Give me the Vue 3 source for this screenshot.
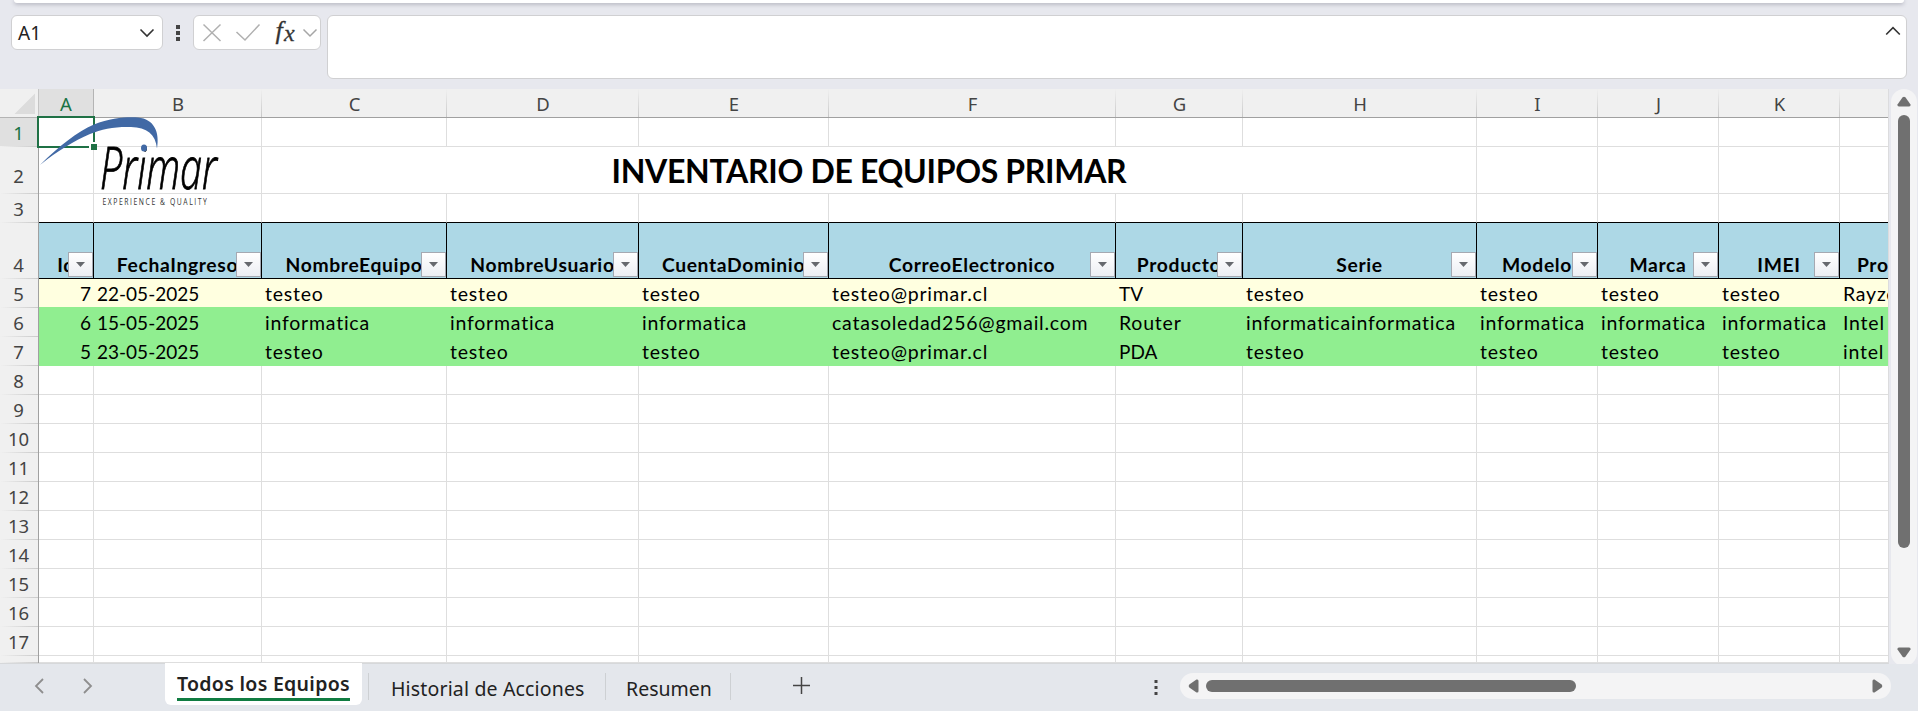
<script setup>
const columns = [
  { id: 'A', w: 55, head: 'Id' },
  { id: 'B', w: 168, head: 'FechaIngreso' },
  { id: 'C', w: 185, head: 'NombreEquipo' },
  { id: 'D', w: 192, head: 'NombreUsuario' },
  { id: 'E', w: 190, head: 'CuentaDominio' },
  { id: 'F', w: 287, head: 'CorreoElectronico' },
  { id: 'G', w: 127, head: 'Producto' },
  { id: 'H', w: 234, head: 'Serie' },
  { id: 'I', w: 121, head: 'Modelo' },
  { id: 'J', w: 121, head: 'Marca' },
  { id: 'K', w: 121, head: 'IMEI' },
  { id: '', w: 138, head: 'Procesador' },
]
const template = '39px ' + columns.map((c) => c.w + 'px').join(' ')

const records = [
  { n: 5, tone: 'yellow', cells: ['7', '22-05-2025', 'testeo', 'testeo', 'testeo', 'testeo@primar.cl', 'TV', 'testeo', 'testeo', 'testeo', 'testeo', 'Rayzen'] },
  { n: 6, tone: 'green', cells: ['6', '15-05-2025', 'informatica', 'informatica', 'informatica', 'catasoledad256@gmail.com', 'Router', 'informaticainformatica', 'informatica', 'informatica', 'informatica', 'Intel'] },
  { n: 7, tone: 'green', cells: ['5', '23-05-2025', 'testeo', 'testeo', 'testeo', 'testeo@primar.cl', 'PDA', 'testeo', 'testeo', 'testeo', 'testeo', 'intel'] },
]
const emptyRows = [8, 9, 10, 11, 12, 13, 14, 15, 16, 17]
const isWord = (t) => /[a-z]/.test(t)
</script>

<template>
  <div class="app">
    <div class="ribbon"></div>
    <div class="formula">
      <div class="box namebox">
        <span>A1</span>
        <svg width="16" height="10" viewBox="0 0 16 10"><path d="M1.500 1.500 8 8l6.500-6.500" fill="none" stroke="#333" stroke-width="1.600" /></svg>
      </div>
      <svg class="dots" width="6" height="18" viewBox="0 0 6 18"><path d="M1 1h4v4H1zM1 7h4v4H1zM1 13h4v4H1z" fill="#444" /></svg>
      <div class="box tools">
        <svg width="126" height="33" viewBox="0 0 126 33" fill="none">
          <path d="M9.500 8.500l17 16.500M26.500 8.500l-17 16.500" stroke="#b0b0b0" stroke-width="1.500" />
          <path d="M42.500 16l8.500 8 14.500-15.500" stroke="#b0b0b0" stroke-width="1.500" />
          <path d="M109.500 13.500l6.500 6.500 6.500-6.500" stroke="#a6a6a6" stroke-width="1.500" />
          <text x="81.500" y="22.500" class="fx">f</text>
          <text x="90" y="24.500" class="fx small">x</text>
        </svg>
      </div>
      <div class="box bar">
        <svg width="16" height="10" viewBox="0 0 16 10"><path d="M1.200 8.500 8 1.700l6.800 6.800" fill="none" stroke="#333" stroke-width="1.600" /></svg>
      </div>
    </div>

    <div class="work">
      <div class="sheet">
        <div class="row colheads" :style="{ gridTemplateColumns: template }">
          <div class="corner">
            <svg width="38" height="28" viewBox="0 0 38 28"><path d="M35 4.500V25H14.500z" fill="#dcdcdc" /></svg>
          </div>
          <div v-for="(c, i) in columns" :key="i" class="ch" :class="{ on: i === 0 }">{{ c.id }}</div>
        </div>
        <div class="row" :style="{ gridTemplateColumns: template }">
          <div class="rh on">1</div>
          <div v-for="(c, i) in columns" :key="i" class="cell"></div>
        </div>
        <div class="row tall" :style="{ gridTemplateColumns: template }">
          <div class="rh">2</div>
          <div class="cell"></div>
          <div class="cell"></div>
          <div class="cell title"><span>INVENTARIO DE EQUIPOS PRIMAR</span></div>
          <div v-for="i in 4" :key="i" class="cell"></div>
        </div>
        <div class="row pretable" :style="{ gridTemplateColumns: template }">
          <div class="rh">3</div>
          <div v-for="(c, i) in columns" :key="i" class="cell"></div>
        </div>
        <div class="row heads" :style="{ gridTemplateColumns: template }">
          <div class="rh">4</div>
          <div v-for="(c, i) in columns" :key="i" class="cell th">
            <span>{{ c.head }}</span>
            <i class="filter"><svg width="9" height="5" viewBox="0 0 9 5"><path d="M0 0h9L4.500 5z" fill="#66696e" /></svg></i>
          </div>
        </div>
        <div v-for="r in records" :key="r.n" class="row data" :class="r.tone" :style="{ gridTemplateColumns: template }">
          <div class="rh">{{ r.n }}</div>
          <div v-for="(t, i) in r.cells" :key="i" class="cell" :class="{ num: i === 0, word: isWord(t) }">{{ t }}</div>
        </div>
        <div v-for="n in emptyRows" :key="n" class="row" :style="{ gridTemplateColumns: template }">
          <div class="rh">{{ n }}</div>
          <div v-for="(c, i) in columns" :key="i" class="cell"></div>
        </div>
        <div class="row stub" :style="{ gridTemplateColumns: template }">
          <div class="rh"></div>
          <div v-for="(c, i) in columns" :key="i" class="cell"></div>
        </div>

        <div class="selection"><i></i></div>
        <svg class="logo" width="190" height="95" viewBox="0 0 190 95">
          <path d="M1 49C20 30 38 16 55 8.500C72 1.800 88 0.800 99 1.500C115 3 121 16 118 32.500C116.500 18 108 11.500 92 11C76 10.500 63 13 51 18C35 25 18 35 1 49z" fill="#4169a5" />
          <text class="brand" x="61" y="73" textLength="117" lengthAdjust="spacingAndGlyphs">Primar</text>
          <ellipse cx="105" cy="32" rx="3" ry="3.600" fill="#4169a5" />
          <text class="tag" transform="translate(63.500 89) scale(.72 1)" textLength="145" lengthAdjust="spacing">EXPERIENCE &amp; QUALITY</text>
        </svg>
      </div>
      <div class="vscroll">
        <svg width="14" height="11" viewBox="0 0 14 11"><path d="M5.600 1.300Q7 0 8.400 1.300L13.500 8.500Q14 10.500 12 10.500H2Q0 10.500.5 8.500z" fill="#707070" /></svg>
        <div class="vthumb"></div>
        <svg class="down" width="14" height="11" viewBox="0 0 14 11"><path d="M5.600 9.700Q7 11 8.400 9.700L13.500 2.500Q14 .5 12 .5H2Q0 .5.5 2.500z" fill="#707070" /></svg>
      </div>
    </div>

    <div class="footer">
      <div class="nav">
        <svg width="10" height="16" viewBox="0 0 10 16"><path d="M9 1 2 8l7 7" fill="none" stroke="#8e8e8e" stroke-width="1.800" /></svg>
        <svg width="10" height="16" viewBox="0 0 10 16"><path d="M1 1l7 7-7 7" fill="none" stroke="#8e8e8e" stroke-width="1.800" /></svg>
      </div>
      <div class="tab active"><span>Todos los Equipos</span></div>
      <div class="tab second"><span>Historial de Acciones</span></div>
      <div class="tab third"><span>Resumen</span></div>
      <svg class="plus" width="17" height="17" viewBox="0 0 17 17"><path d="M8.500 0v17M0 8.500h17" stroke="#444" stroke-width="1.500" /></svg>
      <svg class="fdots" width="4" height="16" viewBox="0 0 4 16"><path d="M.5 0h3v3h-3zM.5 6h3v3h-3zM.5 12h3v3h-3z" fill="#444" /></svg>
      <div class="hscroll">
        <svg width="11" height="14" viewBox="0 0 11 14"><path d="M1.300 5.600Q0 7 1.300 8.400L8.500 13.500Q10.500 14 10.500 12V2Q10.500 0 8.500.5z" fill="#707070" /></svg>
        <div class="hthumb"></div>
        <svg class="right" width="11" height="14" viewBox="0 0 11 14"><path d="M9.700 5.600Q11 7 9.700 8.400L2.500 13.500Q.5 14 .5 12V2Q.5 0 2.500.5z" fill="#707070" /></svg>
      </div>
    </div>
  </div>
</template>

<style>
body {
  margin: 0;
  overflow: hidden;
}
</style>

<style scoped>
.app {
  width: 1918px;
  height: 711px;
  overflow: hidden;
  display: flex;
  flex-direction: column;
  background: #e7e8ee;
  font-family: "Noto Sans", "Open Sans", sans-serif;
  color: #222;
}
svg { display: block; flex: none; }
.ribbon {
  height: 3px;
  flex: none;
  margin: 0 14px;
  background: #fff;
  border-radius: 0 0 8px 8px;
  box-shadow: 0 1px 4px rgba(60, 60, 80, 0.4);
}
.formula {
  height: 86px;
  flex: none;
  box-sizing: border-box;
  padding: 12px 0 0 11px;
  display: flex;
  align-items: flex-start;
}
.box {
  box-sizing: border-box;
  background: #fff;
  border: 1px solid #d0d0d2;
  border-radius: 6px;
  height: 35px;
  display: flex;
  align-items: center;
}
.namebox {
  width: 152px;
  padding: 0 7px 0 6px;
  justify-content: space-between;
  font-size: 19px;
}
.dots { margin: 9px 12px 0 12px; }
.tools { width: 128px; }
.fx {
  font: italic 26px "Liberation Serif", serif;
  fill: #333;
  stroke: #333;
  stroke-width: 0.3;
}
.fx.small { font-size: 24px; }
.bar {
  width: 1580px;
  height: 64px;
  margin-left: 6px;
  padding: 10px 5px 0 0;
  justify-content: flex-end;
  align-items: flex-start;
}
.work {
  height: 575px;
  flex: none;
  display: flex;
}
.sheet {
  position: relative;
  width: 1888px;
  height: 574px;
  overflow: hidden;
  background: #fff;
  border-right: 1px solid #dcdcde;
  border-bottom: 1px solid #d6d8da;
}
.row {
  display: grid;
  grid-template-rows: 100%;
  height: 29px;
  width: 1979px;
}
.tall { height: 47px; }
.heads { height: 56px; }
.colheads { background: #f0f0f0; }
.corner {
  border-right: 1px solid #c4c4c4;
  border-bottom: 1px solid #b4b4b4;
  height: 28px;
}
.ch {
  border-bottom: 1px solid #a0a0a0;
  font-size: 18.500px;
  line-height: 29px;
  height: 28px;
  text-align: center;
  color: #444;
  background: linear-gradient(#f0f0f0, #c8c8c8) right / 1px 100% no-repeat;
}
.ch.on {
  background: #e0e0e0;
  color: #1a7344;
  border-right: 1px solid #b4b4b4;
}
.rh {
  box-sizing: border-box;
  border-right: 1px solid #a0a0a0;
  padding-right: 1px;
  font-size: 18.500px;
  line-height: 29px;
  text-align: center;
  color: #444;
  background: linear-gradient(90deg, #f0f0f0, #cacaca) bottom / 100% 1px no-repeat #f0f0f0;
  overflow: hidden;
}
.rh.on { background-color: #e0e0e0; color: #1a7344; }
.tall .rh { line-height: 57px; }
.heads .rh { line-height: 83px; }
.cell {
  box-sizing: border-box;
  border-right: 1px solid #dedede;
  border-bottom: 1px solid #dedede;
  font-family: Lato, sans-serif;
  font-size: 19px;
  line-height: 29px;
  color: #000;
  white-space: nowrap;
}
.title {
  grid-column: span 6;
  display: flex;
  justify-content: center;
  font-size: 32px;
  font-weight: 700;
  letter-spacing: -0.320px;
  line-height: 48px;
}
.pretable .cell { border-bottom-color: #000; }
.th {
  position: relative;
  background: #add8e6;
  border-color: #000;
  font-size: 19.300px;
  font-weight: 700;
  letter-spacing: 0.650px;
  display: flex;
  justify-content: center;
  align-items: flex-end;
  line-height: 27px;
}
.filter {
  position: absolute;
  right: 0;
  bottom: 1px;
  width: 25px;
  height: 25px;
  box-sizing: border-box;
  border: 1px solid #a5a9b2;
  background: linear-gradient(#fff, #eceef3);
  display: flex;
  align-items: center;
  justify-content: center;
}
.data .cell {
  border: 0;
  padding: 0 3px 0 3px;
}
.data .num { text-align: right; }
.data .word { font-size: 19.500px; letter-spacing: 0.780px; }
.yellow .cell { background: #ffffe0; height: 28px; }
.green .cell { background: #90ee90; }
.yellow { background: #90ee90; }
.stub { height: 7px; }
.selection {
  position: absolute;
  left: 37px;
  top: 27px;
  width: 54px;
  height: 28px;
  border: 2px solid #1f7145;
}
.selection i {
  position: absolute;
  right: -4px;
  bottom: -4px;
  width: 6px;
  height: 6px;
  background: #1f7145;
  box-shadow: -1px -1px 0 1px #fff;
}
.logo { position: absolute; left: 39px; top: 27px; }
.brand {
  font: italic 300 59.500px "Open Sans", sans-serif;
  fill: #000;
  stroke: #000;
  stroke-width: 0.9;
}
.tag { font: 500 9.500px "Open Sans", sans-serif; fill: #333; }
.vscroll {
  width: 26px;
  height: 577px;
  margin-left: 2px;
  box-sizing: border-box;
  padding: 7px 0 8px;
  border-radius: 13px;
  background: #f4f4f5;
  display: flex;
  flex-direction: column;
  align-items: center;
}
.vthumb {
  width: 12px;
  height: 433px;
  margin-top: 8px;
  border-radius: 6px;
  background: #707070;
}
.down { margin-top: auto; }
.footer {
  flex: 1;
  display: flex;
  align-items: flex-start;
  font-size: 19.500px;
  background: #e4e7ec;
}
.nav {
  flex: none;
  box-sizing: border-box;
  width: 165px;
  padding: 14px 0 0 34px;
  display: flex;
  gap: 39px;
}
.tab {
  flex: none;
  box-sizing: border-box;
  height: 27px;
  margin-top: 9px;
  border-right: 1px solid #cdd0d3;
  line-height: 32px;
  white-space: nowrap;
}
.active {
  width: 197px;
  height: 42px;
  margin-top: -1px;
  background: #fff;
  border: 0;
  border-radius: 0 0 6px 6px;
  font-weight: 600;
  letter-spacing: 0.300px;
  line-height: 30px;
  padding: 6px 0 0 12px;
  position: relative;
}
.active span {
  display: block;
  width: 173px;
  height: 29px;
  border-bottom: 3px solid #107c41;
}
.second {
  width: 244px;
  padding-left: 29px;
  letter-spacing: 0.160px;
  background: linear-gradient(#cdd0d3, #cdd0d3) 6px 0 / 1px 100% no-repeat;
}
.third { width: 125px; padding-left: 20px; }
.plus { margin: 13px 0 0 62px; }
.fdots { margin: 16px 0 0 344px; }
.hscroll {
  flex: none;
  box-sizing: border-box;
  width: 711px;
  height: 26px;
  margin: 9px 0 0 22px;
  padding: 0 8px 0 8px;
  border-radius: 13px;
  background: #f4f4f5;
  display: flex;
  align-items: center;
}
.hthumb {
  width: 370px;
  height: 12px;
  margin-left: 7px;
  border-radius: 6px;
  background: #707070;
}
.right { margin-left: auto; }
</style>
